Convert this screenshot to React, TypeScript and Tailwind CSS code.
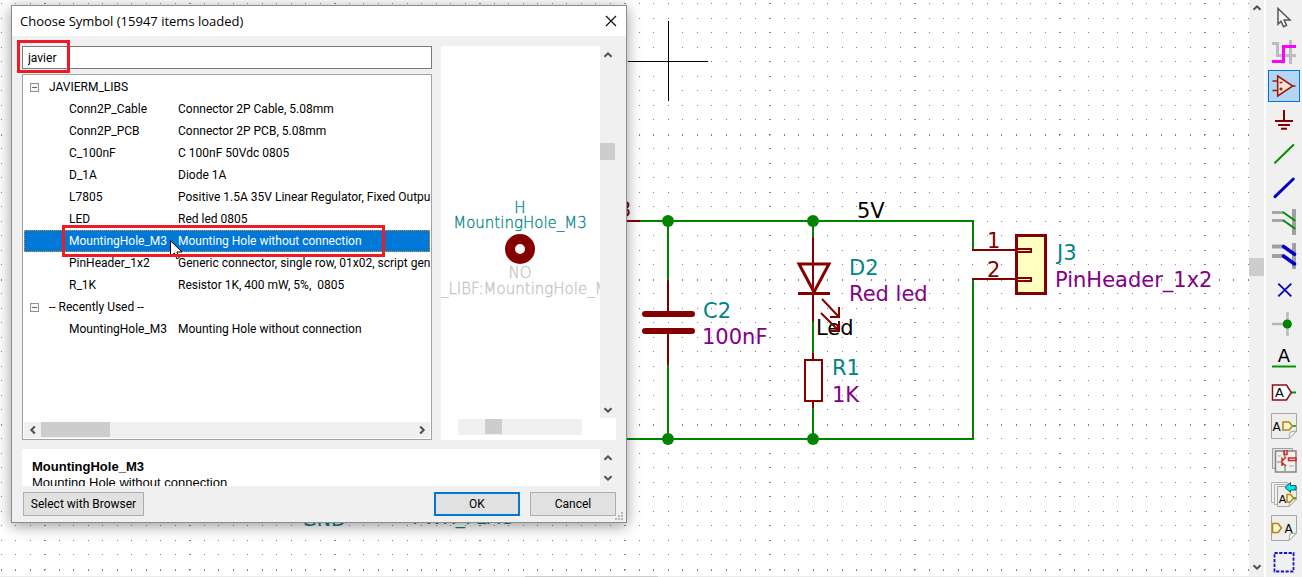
import { useState, type ReactNode } from "react";

type Item = { name: string; description: string };
type Library = { title: string; items: Item[] };

const LIBRARIES: Library[] = [
  {
    title: "JAVIERM_LIBS",
    items: [
      { name: "Conn2P_Cable", description: "Connector 2P Cable, 5.08mm" },
      { name: "Conn2P_PCB", description: "Connector 2P PCB, 5.08mm" },
      { name: "C_100nF", description: "C 100nF 50Vdc 0805" },
      { name: "D_1A", description: "Diode 1A" },
      { name: "L7805", description: "Positive 1.5A 35V Linear Regulator, Fixed Output" },
      { name: "LED", description: "Red led 0805" },
      { name: "MountingHole_M3", description: "Mounting Hole without connection" },
      { name: "PinHeader_1x2", description: "Generic connector, single row, 01x02, script gen" },
      { name: "R_1K", description: "Resistor 1K, 400 mW, 5%,\u00a0 0805" },
    ],
  },
  {
    title: "-- Recently Used --",
    items: [{ name: "MountingHole_M3", description: "Mounting Hole without connection" }],
  },
];

function Chevron({ dir }: { dir: "up" | "down" | "left" | "right" }) {
  const paths = {
    up: "M1.500 6.800 5 3.300 8.500 6.800",
    down: "M1.500 3.200 5 6.700 8.500 3.200",
    left: "M6.800 1.500 3.300 5 6.800 8.500",
    right: "M3.200 1.500 6.700 5 3.200 8.500",
  };
  return (
    <svg viewBox="0 0 10 10" className="size-[10px]" aria-hidden="true">
      <path d={paths[dir]} fill="none" stroke="#505050" strokeWidth="2" />
    </svg>
  );
}

function ScrollButton({ dir, className }: { dir: "up" | "down" | "left" | "right"; className: string }) {
  return (
    <button type="button" aria-label={`Scroll ${dir}`} className={`flex shrink-0 items-center justify-center ${className}`}>
      <Chevron dir={dir} />
    </button>
  );
}

function Schematic() {
  const teal = "#008484";
  const purple = "#840084";
  const maroon = "#840000";
  return (
    <svg className="absolute inset-0 size-full" fontFamily="'DejaVu Sans', sans-serif" fontSize="21">
      <defs>
        <pattern id="grid" width="29" height="29" patternUnits="userSpaceOnUse">
          <path d="M1 3h1v1h-1zM15 3h1v1h-1zM1 18h1v1h-1zM15 18h1v1h-1z" fill="#848484" />
        </pattern>
        <pattern id="columns" width="145" height="29" patternUnits="userSpaceOnUse">
          <path d="M44 3h2v1h-2zM44 18h2v1h-2z" fill="#848484" />
        </pattern>
        <pattern id="rows" width="29" height="145" patternUnits="userSpaceOnUse">
          <path d="M1 134h1v2h-1zM15 134h1v2h-1z" fill="#848484" />
        </pattern>
      </defs>
      <rect width="100%" height="100%" fill="url(#grid)" />
      <rect width="100%" height="100%" fill="url(#columns)" />
      <rect width="100%" height="100%" fill="url(#rows)" />

      <path d="M628 61.5H708M668.5 21V101" stroke="#000" fill="none" />

      <g fill="none" stroke="#008400" strokeWidth="2">
        <path d="M640 221H973V250M973 279V439H620" />
        <path d="M668 221V280M668 365V439M813 221V237M813 322V353M813 408V439" />
      </g>
      <g fill="none" stroke={maroon} strokeWidth="2">
        <path d="M620 221H640M668 280V312M668 333V365M813 237V322M813 353V359M813 402V408M972 250H1016M972 279H1016" />
        <path d="M645 314H692M645 331H692" strokeWidth="6" strokeLinecap="round" />
        <path d="M799 264H829L814 292ZM798 293.500H830" strokeWidth="3" />
        <rect x="805" y="360" width="17" height="41" fill="#fff" />
      </g>
      <g fill="#008400">
        <circle cx="668" cy="221" r="6" />
        <circle cx="813" cy="221" r="6" />
        <circle cx="668" cy="439" r="6" />
        <circle cx="813" cy="439" r="6" />
      </g>
      <g stroke={maroon} strokeWidth="3">
        <rect x="1016.500" y="235.500" width="29" height="58" fill="#ffffc2" />
        <path d="M1016 249H1031V252H1016M1016 278H1031V281H1016" fill="none" strokeWidth="2" />
      </g>

      <text x="857" y="218">5V</text>
      <text x="816" y="335">Led</text>
      <path d="M822 299 839 317M839 307V317H830M821 313 838 330M839 321V331H830" stroke={maroon} strokeWidth="2" fill="none" />
      <g fill={maroon}>
        <text x="618" y="217">3</text>
        <text x="987" y="248">1</text>
        <text x="987" y="277">2</text>
      </g>
      <g fill={teal}>
        <text x="703" y="318">C2</text>
        <text x="849" y="275">D2</text>
        <text x="832" y="375">R1</text>
        <text x="1057" y="260">J3</text>
      </g>
      <g fill={teal} fontSize="19">
        <text x="302" y="526">GND</text>
        <text x="412" y="524">PWR_FLAG</text>
      </g>
      <g fill={purple}>
        <text x="702" y="344">100nF</text>
        <text x="849" y="301">Red led</text>
        <text x="832" y="402">1K</text>
        <text x="1055" y="287">PinHeader_1x2</text>
      </g>
    </svg>
  );
}

function Tree() {
  const [closed, setClosed] = useState<Record<string, boolean>>({});
  const [selected, setSelected] = useState("JAVIERM_LIBS/MountingHole_M3");
  return (
    <div className="relative flex min-h-0 flex-1 flex-col border border-[#a0a4aa] bg-white p-px">
      <div role="tree" aria-label="Symbols" className="flex-1 overflow-hidden">
        {LIBRARIES.map((lib) => (
          <div key={lib.title} role="group">
            <div className="flex h-[22px] items-center gap-[10px] pl-[6px]">
              <button
                type="button"
                aria-label={`Toggle ${lib.title}`}
                onClick={() => setClosed({ ...closed, [lib.title]: !closed[lib.title] })}
                className="flex size-[9px] items-center justify-center border border-[#919191] bg-[#f6f6f6]"
              >
                <span className="h-px w-[5px] bg-[#4b63a7]" />
              </button>
              <span>{lib.title}</span>
            </div>
            {!closed[lib.title] &&
              lib.items.map((item) => {
                const id = `${lib.title}/${item.name}`;
                const on = id === selected;
                return (
                  <div
                    key={id}
                    role="treeitem"
                    aria-selected={on}
                    onClick={() => setSelected(id)}
                    className={`grid h-[22px] grid-cols-[109px_1fr] items-center overflow-hidden whitespace-nowrap pl-[45px] ${
                      on ? "bg-[#0078d7] text-white outline-1 -outline-offset-1 outline-dotted outline-[#e08a3c]" : ""
                    }`}
                  >
                    <span>{item.name}</span>
                    <span className="overflow-hidden">{item.description}</span>
                  </div>
                );
              })}
          </div>
        ))}
      </div>
      <div className="flex h-4 bg-[#f0f0f0]">
        <ScrollButton dir="left" className="w-[17px]" />
        <div className="h-[15px] w-[69px] bg-[#cdcdcd]" />
        <div className="flex-1" />
        <ScrollButton dir="right" className="w-[17px]" />
      </div>
      <svg className="absolute left-[147px] top-[165px] h-[20px] w-[13px]" viewBox="0 0 13 20" aria-hidden="true">
        <path d="M.5.8V16.500L4.300 13 6.800 18.800 9.300 17.700 6.900 12H12Z" fill="#fff" stroke="#000" />
      </svg>
      <div className="pointer-events-none absolute left-[39px] top-[150px] h-[32px] w-[323px] border-3 border-[#ed1c24]" />
    </div>
  );
}

function Preview() {
  return (
    <div className="flex w-[175px] flex-col bg-white">
      <div className="flex min-h-0 flex-1">
        <svg
          className="h-full min-w-0 flex-1"
          viewBox="0 0 159 372"
          fontFamily="'DejaVu Sans', sans-serif"
          fontSize="15"
          fontWeight="200"
          strokeWidth="0.3"
        >
          <g fill="#008484" stroke="#008484" textAnchor="middle">
            <text x="79" y="167">H</text>
            <text x="79" y="182">MountingHole_M3</text>
          </g>
          <circle cx="79" cy="203" r="10" fill="#fff" stroke="#840000" strokeWidth="10" />
          <g fill="#c2c2c2" stroke="#c2c2c2">
            <text x="79" y="232" textAnchor="middle">NO</text>
            <text x="0" y="248">_LIBF:MountingHole_M</text>
          </g>
        </svg>
        <div className="flex w-4 flex-col bg-[#f0f0f0]">
          <ScrollButton dir="up" className="h-[18px] w-[15px]" />
          <div className="h-[79px]" />
          <div className="h-[17px] w-[15px] bg-[#cdcdcd]" />
          <div className="flex-1" />
          <ScrollButton dir="down" className="h-[17px] w-[15px]" />
        </div>
      </div>
      <div className="flex h-[22px] pl-[17px] pr-[34px] pt-px">
        <div className="flex h-4 flex-1 bg-[#f0f0f0] pl-[27px]">
          <div className="h-[15px] w-[17px] bg-[#cdcdcd]" />
        </div>
      </div>
    </div>
  );
}

function SymbolDialog() {
  return (
    <section
      role="dialog"
      aria-labelledby="dialog-title"
      className="absolute left-[11px] top-[5px] flex h-[518px] w-[616px] flex-col border border-[#8c8c8c] bg-[#f0f0f0] font-['Roboto','Noto_Sans',sans-serif] text-[12px] leading-4 text-black shadow-[0_3px_14px_rgba(0,0,0,0.4)]"
    >
      <header className="flex h-[30px] shrink-0 items-center justify-between bg-white pl-2 pr-[9px]">
        <h1 id="dialog-title" className="font-['Open_Sans','Noto_Sans',sans-serif] text-[13px]">
          Choose Symbol (15947 items loaded)
        </h1>
        <button type="button" aria-label="Close" className="flex size-3 items-center justify-center">
          <svg viewBox="0 0 12 12" className="size-3" aria-hidden="true">
            <path d="M1 1 11 11M11 1 1 11" stroke="#111" strokeWidth="1.200" />
          </svg>
        </button>
      </header>
      <div className="flex min-h-0 flex-1 flex-col px-[10px] pb-[6px] pt-[10px]">
        <div className="flex min-h-0 flex-1 gap-[9px]">
          <div className="flex min-w-0 flex-1 flex-col gap-[5px]">
            <div className="relative">
              <input
                aria-label="Filter"
                defaultValue="javier"
                className="block h-[23px] w-full border border-[#7a7a7a] bg-white px-[5px] outline-none"
              />
              <div className="pointer-events-none absolute -left-[5px] -top-[6px] h-[33px] w-[53px] border-3 border-[#ed1c24]" />
            </div>
            <Tree />
          </div>
          <Preview />
        </div>
        <div className="mt-[9px] flex h-[37px] shrink-0">
          <div className="flex-1 overflow-hidden bg-white px-[10px] pt-[10px] font-['Liberation_Sans',sans-serif] text-[13px]">
            <h2 className="font-bold">MountingHole_M3</h2>
            <p>Mounting Hole without connection</p>
          </div>
          <div className="flex w-4 flex-col justify-between">
            <ScrollButton dir="up" className="h-[18px] w-[15px]" />
            <ScrollButton dir="down" className="h-[17px] w-[15px]" />
          </div>
        </div>
        <footer className="mt-[6px] flex h-6 shrink-0 gap-[10px]">
          <button type="button" className="ml-px mr-auto w-[121px] border border-[#adadad] bg-[#e1e1e1]">
            Select with Browser
          </button>
          <button type="button" className="w-[86px] border-2 border-[#0078d7] bg-[#e1e1e1]">
            OK
          </button>
          <button type="button" className="w-[86px] border border-[#adadad] bg-[#e1e1e1]">
            Cancel
          </button>
        </footer>
      </div>
      <svg className="absolute bottom-[2px] right-[3px] size-2" viewBox="0 0 8 8" fill="#b8b8b8" aria-hidden="true">
        <path d="M6 0h2v2h-2zM3 3h2v2h-2zM6 3h2v2h-2zM0 6h2v2h-2zM3 6h2v2h-2zM6 6h2v2h-2z" />
      </svg>
    </section>
  );
}

function Sheet({ x = 3.5, y = 3.5 }: { x?: number; y?: number }) {
  return (
    <g stroke="#a5a5a5" strokeWidth="1">
      <path d={`M${x} ${y}H28.500V21L21 28.500H${x}Z`} fill="#eeeeea" />
      <path d="M21 28.500 22 22 28.500 21Z" fill="#fff" />
    </g>
  );
}

const LETTER = { fontFamily: "'DejaVu Sans', sans-serif", fill: "#000", textAnchor: "middle" as const };

const TOOLS: { label: string; icon: ReactNode }[] = [
  {
    label: "Select item",
    icon: <path d="M10 6.500V22.300L13 19.300 15.500 24.800 18.500 23.400 16.200 18H22Z" fill="#f4f4f4" stroke="#555" strokeWidth="1.500" />,
  },
  {
    label: "Highlight net",
    icon: (
      <g fill="none" strokeWidth="3">
        <path d="M4 7.500H9.500V19.500H28M22.500 4V28" stroke="#bcbcbc" />
        <path d="M4 25.500H15.500V10.500H28" stroke="#f0f" />
      </g>
    ),
  },
  {
    label: "Place symbol",
    icon: (
      <g stroke="#9a1b1b" strokeWidth="1.600" fill="none">
        <path d="M4.500 11H9.500M4.500 20.500H9.500M24.500 16H27.500" />
        <path d="M9.700 6V26L24.700 16Z" fill="#f7e6cd" />
        <path d="M11.500 12.500H14.500M11.500 19H14.500M13 17.500V20.500" />
      </g>
    ),
  },
  {
    label: "Place power port",
    icon: <path d="M16 6V17M7 17H25M10 21H22M13 24.800H19" stroke="#840000" strokeWidth="2" />,
  },
  {
    label: "Place wire",
    icon: <path d="M7 24.700 25.300 7" stroke="#009000" strokeWidth="2" strokeLinecap="round" />,
  },
  {
    label: "Place bus",
    icon: <path d="M7 24.700 25.300 7" stroke="#0000c8" strokeWidth="3" strokeLinecap="round" />,
  },
  {
    label: "Place wire to bus entry",
    icon: (
      <g strokeWidth="2">
        <path d="M26 3V29" stroke="#a0a0a0" strokeWidth="4" />
        <path d="M4 6.500H16M4 14.500H16" stroke="#a8a8a8" strokeWidth="3" />
        <path d="M15.500 6.500 26.500 14.300M15.500 14.500 26.500 22.300" stroke="#009000" strokeLinecap="round" />
      </g>
    ),
  },
  {
    label: "Place bus to bus entry",
    icon: (
      <g strokeWidth="3.500">
        <path d="M26 3V29" stroke="#a0a0a0" strokeWidth="4" />
        <path d="M4 6.500H16M4 16H16" stroke="#a0a0a0" strokeWidth="4" />
        <path d="M15.500 6.500 26.500 14.300M15.500 16 26.500 24" stroke="#0000c8" strokeLinecap="round" />
      </g>
    ),
  },
  {
    label: "Place no-connect flag",
    icon: <path d="M10.300 9.700 23.300 22.300M23.300 9.700 10.300 22.300" stroke="#0000c0" strokeWidth="1.800" />,
  },
  {
    label: "Place junction",
    icon: (
      <g>
        <path d="M4 16H19M19.500 4V28" stroke="#b8b8b8" strokeWidth="2.500" />
        <circle cx="19.300" cy="16" r="4.600" fill="#008400" />
      </g>
    ),
  },
  {
    label: "Place net label",
    icon: (
      <g>
        <text x="16" y="20" fontSize="18" {...LETTER}>A</text>
        <path d="M4 24.500H28" stroke="#009a00" strokeWidth="2" />
      </g>
    ),
  },
  {
    label: "Place global label",
    icon: (
      <g>
        <path d="M23.300 16.500H28" stroke="#009a00" strokeWidth="2" />
        <path d="M4.500 9H18.500L23.300 16.500 18.500 24H4.500Z" fill="#fff" stroke="#8b1010" strokeWidth="1.500" />
        <text x="11.500" y="21" fontSize="13" {...LETTER}>A</text>
      </g>
    ),
  },
  {
    label: "Place hierarchical label",
    icon: (
      <g>
        <Sheet />
        <text x="8.700" y="20.500" fontSize="12" {...LETTER}>A</text>
        <path d="M24.300 16H28" stroke="#009a00" strokeWidth="1.500" />
        <path d="M15 12H21L24.500 16 21 20H15Z" fill="#fdf6dc" stroke="#b8860b" strokeWidth="1.600" />
      </g>
    ),
  },
  {
    label: "Create hierarchical sheet",
    icon: (
      <g fill="none">
        <path d="M4.500 4.500H24.500V24.500H4.500Z" fill="#e6e6e6" stroke="#a0a0a0" />
        <path d="M7.500 7H28V28H7.500Z" fill="#f0f0ec" stroke="#858585" strokeWidth="1.500" />
        <path d="M9 18H14M16.500 8V13M17 21V27" stroke="#4caf50" strokeWidth="1.200" />
        <path d="M14 13.500V22M14 17 18 13M14 18.500 18 22M16 6V10.500H19V6M20.500 14H28V16.500H20.500Z" stroke="#d02828" strokeWidth="1.500" />
        <path d="M10 12H13M21 22H26" stroke="#aaa" />
      </g>
    ),
  },
  {
    label: "Import hierarchical label",
    icon: (
      <g>
        <path d="M3.500 4.500H20V24.500H3.500Z" fill="#f4f4f4" stroke="#b0b0b0" />
        <path d="M6.500 6.500H22V26.500H6.500Z" fill="#f4f4f4" stroke="#b0b0b0" />
        <Sheet x={9.5} y={8.5} />
        <text x="14.500" y="24.500" fontSize="11" {...LETTER}>A</text>
        <path d="M25 20H28" stroke="#009a00" strokeWidth="1.500" />
        <path d="M19 16.500H22.500L25.500 20 22.500 24H19Z" fill="#fdf6dc" stroke="#b8860b" strokeWidth="1.500" />
        <path d="M17 9.500 22.500 4.500V7.500H28V12H22.500V14.500Z" fill="#00e5ee" stroke="#0b5b60" strokeWidth="1" />
      </g>
    ),
  },
  {
    label: "Place sheet pin",
    icon: (
      <g>
        <Sheet />
        <path d="M4.500 11.500H10L13.500 16 10 20.500H4.500Z" fill="#fdf6dc" stroke="#b8860b" strokeWidth="1.600" />
        <text x="20.700" y="20.500" fontSize="12" {...LETTER}>A</text>
      </g>
    ),
  },
  {
    label: "Draw lines",
    icon: <path d="M6.500 7H25.500V25.500H6.500Z" fill="none" stroke="#1414c8" strokeWidth="1.800" strokeDasharray="3.200 1.500" />,
  },
];

function Toolbar() {
  const [active, setActive] = useState(2);
  return (
    <nav aria-label="Schematic tools" className="flex shrink-0 flex-col gap-[2px] overflow-hidden bg-[#f0f0f0] px-[2px] pt-[2px]">
      {TOOLS.map((tool, i) => (
        <button
          key={tool.label}
          type="button"
          title={tool.label}
          aria-label={tool.label}
          aria-pressed={i === active}
          onClick={() => setActive(i)}
          className={`size-8 shrink-0 ${i === active ? "bg-[#b4d6f3] inset-ring inset-ring-[#0078d7]" : ""}`}
        >
          <svg viewBox="0 0 32 32" className="size-8" fill="none" aria-hidden="true">
            {tool.icon}
          </svg>
        </button>
      ))}
    </nav>
  );
}

export default function App() {
  return (
    <div className="flex h-screen w-full overflow-hidden bg-white">
      <div className="flex min-w-0 flex-1 flex-col">
        <div className="flex min-h-0 flex-1">
          <main className="relative min-w-0 flex-1 overflow-hidden">
            <Schematic />
            <SymbolDialog />
          </main>
          <div className="flex w-[15px] shrink-0 flex-col bg-[#f0f0f0]">
            <ScrollButton dir="up" className="h-[15px]" />
            <div className="flex-[1.015]" />
            <div className="h-[18px] bg-[#cdcdcd]" />
            <div className="flex-[1.175]" />
            <ScrollButton dir="down" className="h-[18px]" />
          </div>
        </div>
        <div className="flex h-px shrink-0 bg-[#ececec]">
          <div className="ml-[41.5%] w-[133px] bg-[#cdcdcd]" />
        </div>
      </div>
      <div className="w-[2px] shrink-0 bg-white" />
      <Toolbar />
    </div>
  );
}
